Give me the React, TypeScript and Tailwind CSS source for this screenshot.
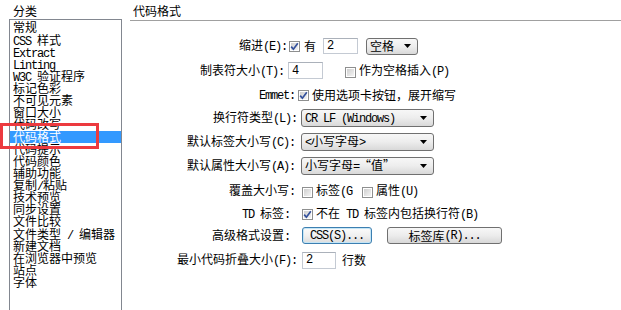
import React from "react";

const MONO = "font-['Liberation_Mono',monospace] text-[12px] tracking-[-1.2px]";

function T({ s }: { s: string }) {
  const parts = s.match(/[\x20-\x7e]+|[^\x20-\x7e]+/g) || [];
  return (
    <>
      {parts.map((p, i) =>
        /[\x20-\x7e]/.test(p[0]) ? (
          <span key={i} className={MONO}>
            {p}
          </span>
        ) : (
          <span key={i}>{p}</span>
        )
      )}
    </>
  );
}

function Cb({ checked }: { checked?: boolean }) {
  return (
    <span className="inline-flex w-[11px] h-[11px] shrink-0 border border-[#8e8f8f] bg-white p-[1px]">
      <span className="flex w-full h-full items-center justify-center bg-linear-to-br from-[#cfcfcf] to-[#f4f4f4]">
        {checked && (
          <svg width="9" height="9" viewBox="0 0 9 9" className="overflow-visible">
            <path d="M1.2 4.6 L3.4 7.2 L7.8 1.2" stroke="#34519c" strokeWidth="1.7" fill="none" />
          </svg>
        )}
      </span>
    </span>
  );
}

function Arrow() {
  return (
    <svg width="7" height="4" viewBox="0 0 7 4">
      <path d="M0 0 H7 L3.5 4 Z" fill="#000" />
    </svg>
  );
}

function Select({ w, h, text }: { w: string; h: string; text: string }) {
  return (
    <div
      className={`flex items-center justify-between shrink-0 border border-[#707070] rounded-[3px] bg-linear-to-b from-[#f7f7f7] via-[#ededed] to-[#d9d9d9] pl-[3px] pr-[6px] ${w} ${h}`}
    >
      <span className="leading-[12px] whitespace-pre">
        <T s={text} />
      </span>
      <Arrow />
    </div>
  );
}

function Input({ w, h, v }: { w: string; h: string; v: string }) {
  return (
    <div
      className={`flex items-center shrink-0 border border-[#c4cad3] border-t-[#abb1ba] bg-white pl-[3px] ${w} ${h}`}
    >
      <span className={MONO}>{v}</span>
    </div>
  );
}

function Label({ w, s }: { w: string; s: string }) {
  return (
    <div className={`shrink-0 text-right whitespace-pre leading-[13px] ${w}`}>
      <T s={s} />
    </div>
  );
}

const items = [
  "常规",
  "CSS 样式",
  "Extract",
  "Linting",
  "W3C 验证程序",
  "标记色彩",
  "不可见元素",
  "窗口大小",
  "代码改写",
  "代码格式",
  "代码提示",
  "代码颜色",
  "辅助功能",
  "复制/粘贴",
  "技术预览",
  "同步设置",
  "文件比较",
  "文件类型 / 编辑器",
  "新建文档",
  "在浏览器中预览",
  "站点",
  "字体",
];

export default function App() {
  return (
    <div className="relative flex w-[621px] h-[310px] overflow-hidden bg-white text-black text-[12px] font-['Noto_Sans_CJK_SC',sans-serif]">
      {/* Left category column */}
      <div className="w-[130px] shrink-0 pl-[9px] flex flex-col">
        <div className="h-[20px] pl-[4px] pt-[4px] leading-[13px]">分类</div>
        <div className="w-[113px] h-[300px] border border-[#828790] border-b-0 px-0 pt-[1px]">
          {items.map((it) => {
            const sel = it === "代码格式";
            return (
              <div
                key={it}
                className={`h-[12.14px] leading-[12px] pl-[3px] whitespace-pre ${
                  sel ? "bg-[#3399ff] text-white" : ""
                }`}
              >
                <T s={it} />
              </div>
            );
          })}
        </div>
      </div>

      {/* Right panel */}
      <div className="flex-1 flex flex-col">
        <div className="h-[21px] pl-[3px] pt-[4px] leading-[13px] border-b border-[#a0a0a0]">代码格式</div>
        <div className="mt-[13px] flex flex-col">
          {/* Row 1 */}
          <div className="flex items-center h-[24px]">
            <Label w="w-[157px]" s="缩进(E):" />
            <span className="ml-[2px]">
              <Cb checked />
            </span>
            <span className="ml-[4px]">有</span>
            <span className="ml-[7px]">
              <Input w="w-[35px]" h="h-[16px]" v="2" />
            </span>
            <span className="ml-[8px]">
              <Select w="w-[52px]" h="h-[17px]" text="空格" />
            </span>
          </div>
          {/* Row 2 */}
          <div className="flex items-center h-[25px]">
            <Label w="w-[154px]" s="制表符大小(T):" />
            <span className="ml-[4px]">
              <Input w="w-[35px]" h="h-[17px]" v="4" />
            </span>
            <span className="ml-[22px]">
              <Cb />
            </span>
            <span className="ml-[3px] whitespace-pre">
              <T s="作为空格插入(P)" />
            </span>
          </div>
          {/* Row 3 */}
          <div className="flex items-center h-[23px]">
            <Label w="w-[165px]" s="Emmet:" />
            <span className="ml-[3px]">
              <Cb checked />
            </span>
            <span className="ml-[3px] whitespace-pre">使用选项卡按钮，展开缩写</span>
          </div>
          {/* Row 4 */}
          <div className="flex items-center h-[24px]">
            <Label w="w-[167px]" s="换行符类型(L):" />
            <span className="ml-[4px]">
              <Select w="w-[133px]" h="h-[18px]" text="CR LF (Windows)" />
            </span>
          </div>
          {/* Row 5 */}
          <div className="flex items-center h-[23px]">
            <Label w="w-[165px]" s="默认标签大小写(C):" />
            <span className="ml-[6px]">
              <Select w="w-[133px]" h="h-[18px]" text="<小写字母>" />
            </span>
          </div>
          {/* Row 6 */}
          <div className="flex items-center h-[25px]">
            <Label w="w-[165px]" s="默认属性大小写(A):" />
            <span className="ml-[6px]">
              <Select w="w-[133px]" h="h-[18px]" text="小写字母=“值”" />
            </span>
          </div>
          {/* Row 7 */}
          <div className="flex items-center h-[25px]">
            <Label w="w-[165px]" s="覆盖大小写:" />
            <span className="ml-[7px]">
              <Cb />
            </span>
            <span className="ml-[3px] whitespace-pre">
              <T s="标签(G" />
            </span>
            <span className="ml-[10px]">
              <Cb />
            </span>
            <span className="ml-[3px] whitespace-pre">
              <T s="属性(U)" />
            </span>
          </div>
          {/* Row 8 */}
          <div className="flex items-center h-[21px]">
            <Label w="w-[160px]" s="TD 标签:" />
            <span className="ml-[12px]">
              <Cb checked />
            </span>
            <span className="ml-[3px] whitespace-pre">
              <T s="不在 TD 标签内包括换行符(B)" />
            </span>
          </div>
          {/* Row 9 */}
          <div className="flex items-center h-[23px]">
            <Label w="w-[160px]" s="高级格式设置:" />
            <div className="ml-[12px] flex items-center justify-center w-[70px] h-[17px] border border-[#3c7fb1] rounded-[3px] bg-linear-to-b from-[#fbfbfb] via-[#f0f0f0] to-[#dcdcdc] shadow-[inset_0_0_0_1px_#c4e5f6] whitespace-pre leading-[12px]">
              <T s="CSS(S)..." />
            </div>
            <div className="ml-[15px] flex items-center justify-center w-[115px] h-[17px] border border-[#707070] rounded-[3px] bg-linear-to-b from-[#f7f7f7] via-[#ececec] to-[#d8d8d8] whitespace-pre leading-[12px]">
              <T s="标签库(R)..." />
            </div>
          </div>
          {/* Row 10 */}
          <div className="flex items-center h-[26px]">
            <Label w="w-[167px]" s="最小代码折叠大小(F):" />
            <span className="ml-[5px]">
              <Input w="w-[34px]" h="h-[17px]" v="2" />
            </span>
            <span className="ml-[6px]">行数</span>
          </div>
        </div>
      </div>

      {/* Red annotation box */}
      <div className="absolute left-0 top-[123px] w-[99px] h-[26px] border-[3px] border-[#ec3a3f]" />
    </div>
  );
}
